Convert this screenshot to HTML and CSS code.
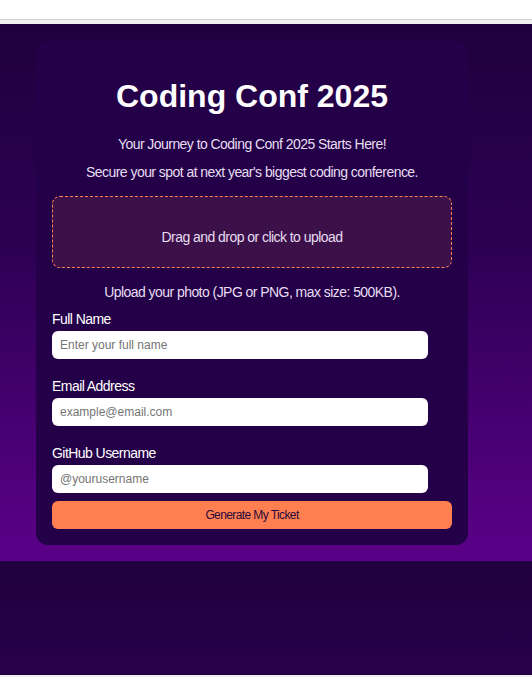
FILE: index.html
```html
<!DOCTYPE html>
<html lang="en">
<head>
<meta charset="utf-8">
<title>Coding Conf 2025</title>
<link rel="stylesheet" href="styles.css">
</head>
<body>
<div class="topbar"></div>
<div class="topstrip"></div>
<section class="hero">
  <div class="card">
    <h1 class="title">Coding Conf 2025</h1>
    <p class="lead">Your Journey to Coding Conf 2025 Starts Here!</p>
    <p class="lead second">Secure your spot at next year's biggest coding conference.</p>
    <div class="dropzone">Drag and drop or click to upload</div>
    <p class="hint">Upload your photo (JPG or PNG, max size: 500KB).</p>
    <form class="form">
      <div class="field">
        <label class="label">Full Name</label>
        <input class="input" type="text" placeholder="Enter your full name">
      </div>
      <div class="field">
        <label class="label">Email Address</label>
        <input class="input" type="text" placeholder="example@email.com">
      </div>
      <div class="field last">
        <label class="label">GitHub Username</label>
        <input class="input" type="text" placeholder="@yourusername">
      </div>
      <button class="btn" type="button">Generate My Ticket</button>
    </form>
  </div>
</section>
<div class="lower"></div>
<div class="bottomstrip"></div>
</body>
</html>
```
FILE: styles.css
```css
html, body {
  margin: 0;
  padding: 0;
  background: #ffffff;
  font-family: "Liberation Sans", Arial, sans-serif;
}
.topbar {
  height: 19px;
  background: #ffffff;
  border-bottom: 1px solid #cfcfcf;
}
.topstrip {
  height: 4px;
  background: #f1f1f1;
}
.hero {
  padding: 17px 0 16px 36px;
  background: linear-gradient(180deg, #1f003d 0%, #2c0052 40%, #5b0089 100%);
}
.card {
  width: 432px;
  box-sizing: border-box;
  padding: 16px;
  background: #230048;
  border-radius: 12px;
  color: #ffffff;
}
.title {
  margin: 21px 0;
  font-size: 32px;
  line-height: 37px;
  font-weight: bold;
  text-align: center;
  color: #ffffff;
}
.lead {
  margin: 0;
  font-size: 14px;
  letter-spacing: -0.55px;
  line-height: 16px;
  text-align: center;
  color: #e6def0;
}
.second {
  margin-top: 12px;
}
.dropzone {
  margin-top: 16px;
  height: 72px;
  box-sizing: border-box;
  padding: 32px 16px 0;
  border: 1px dashed #ff7f50;
  border-radius: 8px;
  background: #3c1049;
  font-size: 14px;
  letter-spacing: -0.55px;
  line-height: 16px;
  text-align: center;
  color: #e6def0;
}
.hint {
  margin: 16px 0 0;
  font-size: 14px;
  letter-spacing: -0.55px;
  line-height: 16px;
  text-align: center;
  color: #e6def0;
}
.form {
  margin-top: 11px;
  display: flex;
  flex-direction: column;
}
.field {
  display: flex;
  flex-direction: column;
  margin-bottom: 19px;
}
.field.last {
  margin-bottom: 8px;
}
.label {
  font-size: 14px;
  letter-spacing: -0.55px;
  line-height: 16px;
  margin-bottom: 4px;
  color: #ffffff;
}
.input {
  width: 376px;
  height: 28px;
  box-sizing: border-box;
  border: none;
  border-radius: 6px;
  padding: 0 8px;
  background: #ffffff;
  font-family: "Liberation Sans", Arial, sans-serif;
  font-size: 12px;
  color: #222;
  outline: none;
}
.input::placeholder {
  color: #757575;
}
.btn {
  height: 28px;
  width: 100%;
  border: none;
  border-radius: 6px;
  background: #ff7f50;
  color: #2a0a3c;
  font-family: "Liberation Sans", Arial, sans-serif;
  font-size: 12px;
  letter-spacing: -0.6px;
  padding: 0;
}
.lower {
  height: 114px;
  background: linear-gradient(180deg, #20003e 0%, #28004a 100%);
}
.bottomstrip {
  height: 2px;
  background: #efefef;
}
```
